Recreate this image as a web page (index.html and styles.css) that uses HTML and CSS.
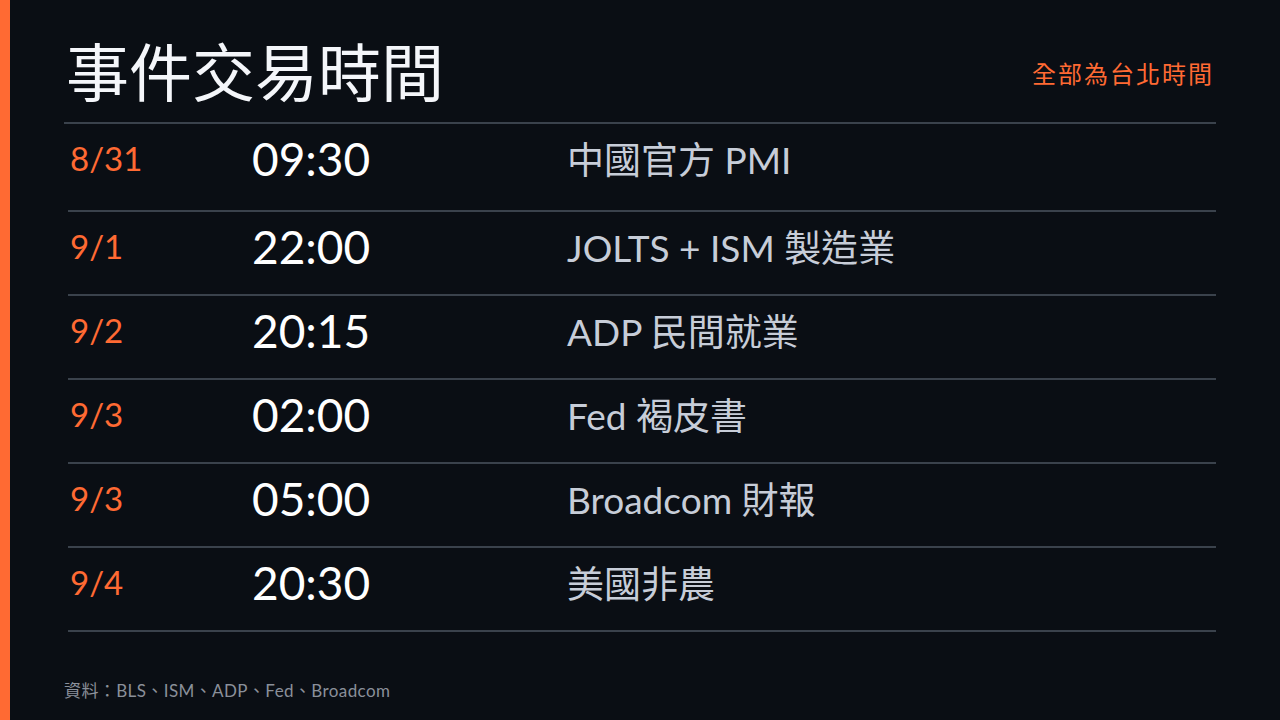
FILE: index.html
```html
<!DOCTYPE html>
<html lang="zh-Hant">
<head>
<meta charset="UTF-8">
<meta name="viewport" content="width=device-width, initial-scale=1.0">
<title>事件交易時間</title>
<link rel="stylesheet" href="styles.css">
</head>
<body>
<div class="slide">
    <div class="accent-bar"></div>
    <div class="content">
        <div class="header">
            <h1>事件交易時間</h1>
            <div class="tz-note">全部為台北時間</div>
        </div>
        <div class="schedule">
            <div class="row">
                <div class="date">8/31</div>
                <div class="time">09:30</div>
                <div class="event">中國官方 PMI</div>
            </div>
            <div class="row">
                <div class="date">9/1</div>
                <div class="time">22:00</div>
                <div class="event">JOLTS + ISM 製造業</div>
            </div>
            <div class="row">
                <div class="date">9/2</div>
                <div class="time">20:15</div>
                <div class="event">ADP 民間就業</div>
            </div>
            <div class="row">
                <div class="date">9/3</div>
                <div class="time">02:00</div>
                <div class="event">Fed 褐皮書</div>
            </div>
            <div class="row">
                <div class="date">9/3</div>
                <div class="time">05:00</div>
                <div class="event">Broadcom 財報</div>
            </div>
            <div class="row">
                <div class="date">9/4</div>
                <div class="time">20:30</div>
                <div class="event">美國非農</div>
            </div>
        </div>
        <div class="source">資料：BLS、ISM、ADP、Fed、Broadcom</div>
    </div>
</div>
</body>
</html>
```

FILE: styles.css
```css
body {
    margin: 0;
    background-color: #0a0e14;
    font-family: 'Lato', 'Noto Sans CJK TC', sans-serif;
}
.slide {
    display: flex;
    width: 1280px;
    height: 720px;
    overflow: hidden;
    background-color: #0a0e14;
}
.accent-bar {
    width: 10px;
    flex-shrink: 0;
    background-color: #ff6a33;
}
.content {
    flex: 1;
    padding: 0 64px 0 54px;
    display: flex;
    flex-direction: column;
}
.header {
    flex-shrink: 0;
    height: 124px;
    box-sizing: border-box;
    padding-top: 22px;
    display: flex;
    align-items: center;
    justify-content: space-between;
    border-bottom: 2px solid #3a424c;
}
.header h1 {
    margin: 0 0 0 2px;
    font-family: 'Noto Sans CJK TC', sans-serif;
    font-weight: 400;
    font-size: 63px;
    color: #f4f6fa;
    line-height: 1;
    padding-bottom: 8px;
}
.tz-note {
    font-family: 'Noto Sans CJK TC', sans-serif;
    font-size: 24px;
    color: #ff6a33;
    margin-right: 2px;
    letter-spacing: 2px;
    padding-bottom: 0;
}
.schedule {
    flex-shrink: 0;
    margin-left: 4px;
}
.row {
    display: grid;
    grid-template-columns: 184px 315px 1fr;
    align-items: center;
    padding-bottom: 14px;
    box-sizing: border-box;
    border-bottom: 2px solid #3a424c;
    height: 84px;
}
.row:first-child {
    height: 88px;
    padding-bottom: 18px;
}
.date {
    font-size: 33px;
    color: #ff6a33;
    padding-left: 2px;
}
.time {
    font-size: 46px;
    color: #ffffff;
}
.event {
    font-size: 37px;
    color: #c7cdd8;
}
.source {
    margin-top: 45px;
    font-size: 17px;
    letter-spacing: 0.4px;
    color: #8a909a;
}
```
